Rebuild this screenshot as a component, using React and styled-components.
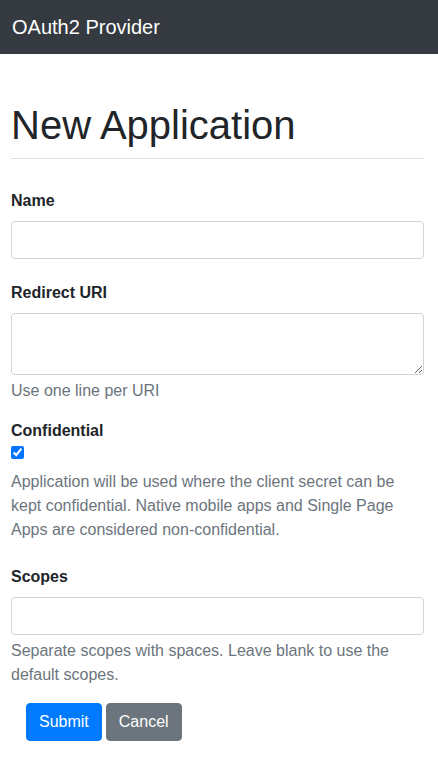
import React from 'react'
import styled, {createGlobalStyle} from 'styled-components'

const GlobalStyle = createGlobalStyle`
  body {
    margin: 0;
    font-family: "Liberation Sans", Arial, sans-serif;
    font-size: 16px;
    line-height: 1.5;
    color: #212529;
    background-color: #fff;
  }

  * {
    box-sizing: border-box;
  }
`

const Navbar = styled.nav`
  height: 54px;
  background-color: #343a40;
  display: flex;
  align-items: center;
  padding: 0 12px;
`

const Brand = styled.a`
  color: #fff;
  font-size: 20px;
  line-height: 30px;
  text-decoration: none;
`

const Container = styled.div`
  padding: 0 14px 0 11px;
`

const Title = styled.h1`
  margin: 47px 0 0;
  padding-bottom: 9px;
  font-size: 40px;
  line-height: 48px;
  font-weight: 400;
  border-bottom: 1px solid #dee2e6;
`

const Form = styled.form`
  margin-top: 30px;
  display: flex;
  flex-direction: column;
`

const Group = styled.div`
  margin-bottom: ${props => props.gap}px;
`

const Label = styled.label`
  display: block;
  font-weight: 700;
  line-height: 24px;
  margin-bottom: ${props => props.$mb ?? 8}px;
`

const Input = styled.input`
  display: block;
  width: 100%;
  height: 38px;
  padding: 6px 12px;
  font-family: inherit;
  font-size: 16px;
  line-height: 24px;
  color: #495057;
  border: 1px solid #ced4da;
  border-radius: 4px;
  background: #fff;
`

const TextArea = styled.textarea`
  display: block;
  width: 100%;
  height: 62px;
  padding: 6px 12px;
  margin: 0;
  font-family: inherit;
  font-size: 16px;
  line-height: 24px;
  color: #495057;
  border: 1px solid #ced4da;
  border-radius: 4px;
  resize: vertical;
`

const CheckRow = styled.div`
  display: flex;
  height: 13px;
  margin-top: 3px;

  & > input {
    width: 13px;
    height: 13px;
    margin: 0;
  }
`

const Help = styled.small`
  display: block;
  margin-top: ${props => props.$mt ?? 4}px;
  font-size: 16px;
  line-height: 24px;
  color: #6c757d;
`

const Actions = styled.div`
  display: flex;
  gap: 4px;
  padding-left: 15px;
`

const Btn = styled.button`
  height: 38px;
  padding: 6px 12px;
  font-family: inherit;
  font-size: 16px;
  line-height: 24px;
  color: #fff;
  border-radius: 4px;
  border: 1px solid ${props => props.$color};
  background-color: ${props => props.$color};
  cursor: pointer;
`

const App = () => {
    return (
        <>
            <GlobalStyle/>
            <Navbar>
                <Brand href="#">OAuth2 Provider</Brand>
            </Navbar>

            <Container>
                <Title>New Application</Title>

                <Form onSubmit={e => e.preventDefault()}>
                    <Group gap={22}>
                        <Label htmlFor="app-name">Name</Label>
                        <Input id="app-name" type="text"/>
                    </Group>

                    <Group gap={16}>
                        <Label htmlFor="app-redirect">Redirect URI</Label>
                        <TextArea id="app-redirect" rows={2}/>
                        <Help>Use one line per URI</Help>
                    </Group>

                    <Group gap={23}>
                        <Label htmlFor="app-confidential" $mb={0}>Confidential</Label>
                        <CheckRow>
                            <input id="app-confidential" type="checkbox" defaultChecked/>
                        </CheckRow>
                        <Help $mt={11}>
                            Application will be used where the client secret can be kept confidential.
                            Native mobile apps and Single Page Apps are considered non-confidential.
                        </Help>
                    </Group>

                    <Group gap={16}>
                        <Label htmlFor="app-scopes">Scopes</Label>
                        <Input id="app-scopes" type="text"/>
                        <Help>Separate scopes with spaces. Leave blank to use the default scopes.</Help>
                    </Group>

                    <Actions>
                        <Btn type="submit" $color="#007bff">Submit</Btn>
                        <Btn type="button" $color="#6c757d">Cancel</Btn>
                    </Actions>
                </Form>
            </Container>
        </>
    )
}

export default App
